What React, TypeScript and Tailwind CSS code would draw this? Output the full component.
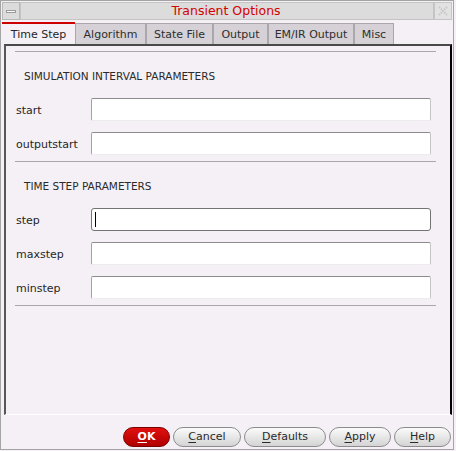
import React from 'react';

const tabs = [
  { label: 'Time Step', w: 'w-[73px]', active: true },
  { label: 'Algorithm', w: 'w-[71px]' },
  { label: 'State File', w: 'w-[67px]' },
  { label: 'Output', w: 'w-[55px]' },
  { label: 'EM/IR Output', w: 'w-[86px]' },
  { label: 'Misc', w: 'w-[40px]' },
];

function Field({ label, focused }: { label: string; focused?: boolean }) {
  return (
    <div className="flex items-center h-[23px]">
      <div className="w-[75px] pt-[3px] text-[#262626]">{label}</div>
      {focused ? (
        <div className="w-[340px] h-[23px] bg-white border border-[#747474] rounded-[3px] flex items-center pl-[3px]">
          <div className="w-px h-[15px] bg-black" />
        </div>
      ) : (
        <div className="w-[340px] h-[23px] bg-white rounded-[2px] border-t border-l border-r border-b border-t-[#8c8c8c] border-l-[#a4a4a4] border-r-[#c4c4c4] border-b-[#ececec]" />
      )}
    </div>
  );
}

function Separator() {
  return <div className="ml-[9px] w-[421px] h-px bg-[#aba6ab]" />;
}

function Heading({ children }: { children: React.ReactNode }) {
  return (
    <div className="h-[46px] pt-[3px] pl-[18px] flex items-center text-[10.5px] text-[#2a2a2a]">{children}</div>
  );
}

function Btn({ w, children, primary }: { w: string; children: React.ReactNode; primary?: boolean }) {
  return primary ? (
    <div className={`${w} h-[20px] rounded-full border border-[#7a0000] bg-gradient-to-b from-[#e01010] to-[#b00000] text-white font-bold flex items-center justify-center`}>
      {children}
    </div>
  ) : (
    <div className={`${w} h-[20px] rounded-full border border-[#8c8c8c] bg-gradient-to-b from-[#fbfbfb] to-[#d4d4d4] text-[#2a2a2a] flex items-center justify-center`}>
      {children}
    </div>
  );
}

export default function App() {
  return (
    <div className="w-[456px] h-[451px] bg-[#f4f0f6] font-['DejaVu_Sans',sans-serif] text-[11px]">
      <div className="w-[454px] h-[450px] border border-[#a4a4a4] flex flex-col">
        {/* title bar */}
        <div className="mt-px mx-px h-[18px] flex">
          <div className="w-[18px] h-[18px] bg-[#dcdcdc] border border-[#b8b8b8] flex items-center justify-center">
            <div className="w-[10px] h-[3px] bg-white border border-[#9a9a9a]" />
          </div>
          <div className="flex-1 bg-[#dcdcdc] border border-[#c4c4c4] flex items-center justify-center text-[12.5px] text-[#d40000] pr-[2px]">
            Transient Options
          </div>
          <div className="w-[18px] h-[18px] bg-[#e2e2e2] border border-[#c4c4c4] flex items-center justify-center">
            <svg width="10" height="10" viewBox="0 0 10 10">
              <path d="M1 1 L9 9 M9 1 L1 9" stroke="#c8c8c8" strokeWidth="2" strokeDasharray="1.5 1" />
            </svg>
          </div>
        </div>

        {/* tabs */}
        <div className="mt-[2px] h-[22px] flex pl-px items-end">
          {tabs.map((t) =>
            t.active ? (
              <div
                key={t.label}
                className={`${t.w} h-[22px] pt-[2px] bg-[#f4f0f6] border-t-2 border-[#cc0000] flex items-center justify-center text-[#262626]`}
              >
                {t.label}
              </div>
            ) : (
              <div
                key={t.label}
                className={`${t.w} h-[21px] pt-[2px] bg-[#d5d1d6] border border-b-0 border-[#aaa6aa] flex items-center justify-center text-[#2e2e2e]`}
              >
                {t.label}
              </div>
            )
          )}
        </div>

        {/* panel */}
        <div className="ml-[3px] w-[448px] h-[371px] border-t-2 border-l-2 border-r-2 border-b border-t-[#4a4a4a] border-l-[#575757] border-r-black border-b-white">
          <div className="mt-[5px]">
            <Separator />
          </div>
          <Heading>SIMULATION INTERVAL PARAMETERS</Heading>
          <div className="pl-[10px] flex flex-col gap-[11px]">
            <Field label="start" />
            <Field label="outputstart" />
          </div>
          <div className="mt-[6px]">
            <Separator />
          </div>
          <Heading>TIME STEP PARAMETERS</Heading>
          <div className="pl-[10px] flex flex-col gap-[11px]">
            <Field label="step" focused />
            <Field label="maxstep" />
            <Field label="minstep" />
          </div>
          <div className="mt-[6px]">
            <Separator />
          </div>
        </div>

        {/* buttons */}
        <div className="mt-[12px] flex justify-end gap-[3px] pr-[2px]">
          <Btn w="w-[47px]" primary>
            <span className="underline underline-offset-2">O</span>K
          </Btn>
          <Btn w="w-[68px]">
            <span className="underline underline-offset-2">C</span>ancel
          </Btn>
          <Btn w="w-[82px]">
            <span className="underline underline-offset-2">D</span>efaults
          </Btn>
          <Btn w="w-[62px]">
            <span className="underline underline-offset-2">A</span>pply
          </Btn>
          <Btn w="w-[57px]">
            <span className="underline underline-offset-2">H</span>elp
          </Btn>
        </div>
      </div>
    </div>
  );
}
